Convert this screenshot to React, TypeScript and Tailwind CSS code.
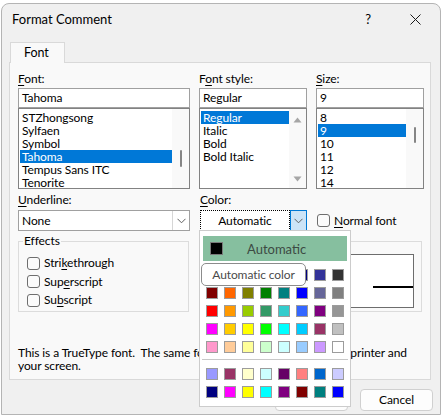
import React from "react";

const U = ({ children }: { children: React.ReactNode }) => (
  <span className="underline underline-offset-[2px] decoration-[1px]">{children}</span>
);

const Check = () => (
  <span className="block w-[13px] h-[13px] shrink-0 rounded-[3px] border border-[#6e6e6e] bg-[#fbfbfb]" />
);

const Chevron = () => (
  <svg width="9" height="6" viewBox="0 0 9 6" className="block">
    <path d="M0.5 0.8 L4.5 4.8 L8.5 0.8" fill="none" stroke="#5f5f5f" strokeWidth="1" />
  </svg>
);

const rowsTop = [
  ["bg-[#000000]", "bg-[#993300]", "bg-[#333300]", "bg-[#003300]", "bg-[#003366]", "bg-[#000080]", "bg-[#333399]", "bg-[#333333]"],
  ["bg-[#800000]", "bg-[#ff6600]", "bg-[#808000]", "bg-[#008000]", "bg-[#008080]", "bg-[#0000ff]", "bg-[#666699]", "bg-[#808080]"],
  ["bg-[#ff0000]", "bg-[#ff9900]", "bg-[#99cc00]", "bg-[#339966]", "bg-[#33cccc]", "bg-[#3366ff]", "bg-[#800080]", "bg-[#969696]"],
  ["bg-[#ff00ff]", "bg-[#ffcc00]", "bg-[#ffff00]", "bg-[#00ff00]", "bg-[#00ffff]", "bg-[#00ccff]", "bg-[#993366]", "bg-[#c0c0c0]"],
  ["bg-[#ff99cc]", "bg-[#ffcc99]", "bg-[#ffff99]", "bg-[#ccffcc]", "bg-[#ccffff]", "bg-[#99ccff]", "bg-[#cc99ff]", "bg-[#ffffff]"],
];
const rowsBottom = [
  ["bg-[#9999ff]", "bg-[#993366]", "bg-[#ffffcc]", "bg-[#ccffff]", "bg-[#660066]", "bg-[#ff8080]", "bg-[#0066cc]", "bg-[#ccccff]"],
  ["bg-[#000080]", "bg-[#ff00ff]", "bg-[#ffff00]", "bg-[#00ffff]", "bg-[#800080]", "bg-[#800000]", "bg-[#008080]", "bg-[#0000ff]"],
];

const Swatches = ({ rows }: { rows: string[][] }) => (
  <div className="grid grid-cols-[repeat(8,12px)] gap-[6px] px-[3px]">
    {rows.flat().map((c, i) => (
      <span key={i} className={`block w-[12px] h-[12px] border border-[#9c9c9c] ${c}`} />
    ))}
  </div>
);

function ListBox({
  items,
  selected,
  width,
  scroll,
}: {
  items: string[];
  selected: number;
  width: string;
  scroll: "thumbA" | "thumbB" | "arrows";
}) {
  return (
    <div className={`${width} h-[81px] border border-[#828282] bg-white flex`}>
      <div className="flex-1 pt-[2px] pl-[1px]">
        {items.map((it, i) => (
          <div
            key={it}
            className={`h-[13px] leading-[13px] pl-[2px] whitespace-nowrap ${
              i === selected ? "bg-[#0078d7] text-white" : "text-black"
            }`}
          >
            {it}
          </div>
        ))}
      </div>
      <div className="w-[17px] bg-[#f9f9f9] flex flex-col items-center">
        {scroll === "thumbA" && <span className="block mt-[41px] w-[2px] h-[17px] rounded-full bg-[#858585]" />}
        {scroll === "thumbB" && <span className="block mt-[18px] w-[2px] h-[16px] rounded-full bg-[#858585]" />}
        {scroll === "arrows" && (
          <>
            <svg width="9" height="6" viewBox="0 0 9 6" className="mt-[8px]">
              <path d="M0.5 5.5 L4.5 0.5 L8.5 5.5 Z" fill="#a6a6a6" />
            </svg>
            <div className="flex-1" />
            <svg width="9" height="6" viewBox="0 0 9 6" className="mb-[6px]">
              <path d="M0.5 0.5 L4.5 5.5 L8.5 0.5 Z" fill="#a6a6a6" />
            </svg>
          </>
        )}
      </div>
    </div>
  );
}

export default function App() {
  return (
    <div className="relative w-[441px] h-[417px] overflow-hidden bg-white pt-[3px] pl-[1px] text-[12px] tracking-[-0.1px] leading-[16px] text-black font-['Lato',sans-serif]">
      {/* Window */}
      <div className="w-[440px] h-[412px] rounded-t-[8px] border border-[#b4b4b4] bg-[#f0f0f0]">
        {/* Title bar */}
        <div className="h-[30px] flex items-center pl-[10px]">
          <span className="text-[13px] tracking-normal">Format Comment</span>
          <div className="flex-1" />
          <span className="text-[13px] mr-[39px]">?</span>
          <svg width="11" height="11" viewBox="0 0 11 11" className="mr-[19px]">
            <path d="M0.5 0.5 L10.5 10.5 M10.5 0.5 L0.5 10.5" stroke="#1a1a1a" strokeWidth="1" />
          </svg>
        </div>

        {/* Tab strip */}
        <div className="mt-[8px] pl-[8px] flex">
          <div className="relative z-10 -mb-[1px] w-[55px] h-[21px] border border-b-0 border-[#d9d9d9] bg-[#f9f9f9] flex items-center pl-[13px] text-[12.5px]">
            Font
          </div>
        </div>

        {/* Panel */}
        <div className="ml-[7px] w-[422px] h-[318px] border border-[#d9d9d9] bg-[#f9f9f9] pl-[8px] pt-[8px]">
          {/* Row A */}
          <div className="flex gap-[9px]">
            <div className="w-[172px]">
              <div className="h-[16px]"><U>F</U>ont:</div>
              <div className="mt-[1px] h-[20px] border border-[#a0a0a0] bg-white pl-[3px] leading-[18px]">Tahoma</div>
              <ListBox
                width="w-[172px]"
                items={["STZhongsong", "Sylfaen", "Symbol", "Tahoma", "Tempus Sans ITC", "Tenorite"]}
                selected={3}
                scroll="thumbA"
              />
            </div>
            <div className="w-[108px]">
              <div className="h-[16px]">F<U>o</U>nt style:</div>
              <div className="mt-[1px] h-[20px] border border-[#a0a0a0] bg-white pl-[3px] leading-[18px]">Regular</div>
              <ListBox width="w-[108px]" items={["Regular", "Italic", "Bold", "Bold Italic"]} selected={0} scroll="arrows" />
            </div>
            <div className="w-[108px]">
              <div className="h-[16px]"><U>S</U>ize:</div>
              <div className="mt-[1px] h-[20px] border border-[#a0a0a0] bg-white pl-[3px] leading-[18px]">9</div>
              <ListBox width="w-[108px]" items={["8", "9", "10", "11", "12", "14"]} selected={1} scroll="thumbB" />
            </div>
          </div>

          {/* Row B */}
          <div className="mt-[3px] flex">
            <div className="w-[172px]">
              <div className="h-[16px]"><U>U</U>nderline:</div>
              <div className="mt-[2px] h-[21px] border border-[#a0a0a0] bg-white flex">
                <span className="flex-1 pl-[3px] leading-[19px]">None</span>
                <span className="w-[17px] border-l border-[#d6d6d6] flex items-center justify-center">
                  <Chevron />
                </span>
              </div>
            </div>
            <div className="ml-[10px] w-[107px]">
              <div className="h-[16px]"><U>C</U>olor:</div>
              <div className="mt-[2px] h-[21px] flex">
                <span className="flex-1 border border-dotted border-black bg-white flex items-center justify-center">
                  Automatic
                </span>
                <span className="w-[17px] border border-[#0078d4] bg-[#cce4f7] flex items-center justify-center">
                  <Chevron />
                </span>
              </div>
            </div>
            <div className="ml-[10px] mt-[18px] h-[21px] flex items-center gap-[4px]">
              <Check />
              <span><U>N</U>ormal font</span>
            </div>
          </div>

          {/* Row C */}
          <div className="mt-[10px] flex">
            <div className="relative w-[171px] h-[71px] border border-[#dcdcdc] pt-[12px] pl-[8px]">
              <span className="absolute -top-[9px] left-[4px] px-[1px] bg-[#f9f9f9]">Effects</span>
              <div className="h-[18.5px] flex items-center gap-[4px]">
                <Check />
                <span>Stri<U>k</U>ethrough</span>
              </div>
              <div className="h-[18.5px] flex items-center gap-[4px]">
                <Check />
                <span>Sup<U>e</U>rscript</span>
              </div>
              <div className="h-[18.5px] flex items-center gap-[4px]">
                <Check />
                <span>Su<U>b</U>script</span>
              </div>
            </div>
            <div className="ml-[11px] w-[222px] h-[71px] border border-[#dcdcdc] px-[7px] pt-[12px]">
              <div className="h-[54px] border border-[#6d6d6d] bg-white flex flex-col">
                <div className="h-[31px]" />
                <div className="ml-[164px] h-[2px] bg-black" />
              </div>
            </div>
          </div>

          {/* Description */}
          <div className="mt-[34px] leading-[13px] whitespace-pre">
            {"This is a TrueType font.  The same font will be used on both your printer and\nyour screen."}
          </div>
        </div>

        {/* Buttons */}
        <div className="mt-[9px] flex justify-end gap-[12px] pr-[7px]">
          <div className="w-[73px] h-[22px] rounded-[4px] border border-[#d0d0d0] bg-[#fdfdfd] flex items-center justify-center">
            OK
          </div>
          <div className="w-[73px] h-[22px] rounded-[4px] border border-[#d0d0d0] bg-[#fdfdfd] flex items-center justify-center">
            Cancel
          </div>
        </div>
      </div>

      {/* Color popup (overlay) */}
      <div className="absolute left-[199px] top-[230px] w-[152px] h-[177px] border border-[#cccccc] bg-white px-[3px] pt-[5px]">
        <div className="h-[25px] bg-[#86bf9f] flex items-center pl-[7px]">
          <span className="block w-[13px] h-[13px] bg-black border border-[#7a7a7a]" />
          <span className="ml-[24px] text-[13px] tracking-normal text-[#3d4a43]">Automatic</span>
        </div>
        <div className="mt-[8px]">
          <Swatches rows={rowsTop} />
        </div>
        <div className="mt-[6px] -mx-[1px] h-px bg-[#c8c8c8]" />
        <div className="mt-[8px]">
          <Swatches rows={rowsBottom} />
        </div>
      </div>

      {/* Tooltip (overlay) */}
      <div className="absolute left-[201px] top-[263px] w-[105px] h-[23px] rounded-[5px] border border-[#8c8c8c] bg-white flex items-center justify-center text-[#4a4a4a]">
        Automatic color
      </div>
    </div>
  );
}
